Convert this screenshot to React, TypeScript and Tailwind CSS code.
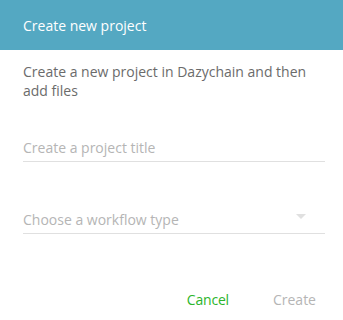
import React from "react";

export default function App() {
  return (
    <div className="w-[343px] h-[320px] bg-white overflow-hidden" style={{ fontFamily: '"Open Sans", sans-serif' }}>
      <div className="h-[50px] bg-[#54a8c2] flex items-center pl-[23px] text-white text-[14px]">
        Create new project
      </div>
      <div className="pl-[23px] pr-[18px]">
        <p className="pt-[12px] text-[14px] leading-[19px] text-[#6b6b6b]">
          Create a new project in Dazychain and then add files
        </p>
        <div className="mt-[38px] border-b border-[#e0e0e0]">
          <input
            className="block w-full text-[14px] leading-[19px] h-[19px] mb-[4px] outline-none text-[#6b6b6b] placeholder:text-[#b5b5b5] bg-transparent"
            placeholder="Create a project title"
          />
        </div>
        <div className="mt-[48px] border-b border-[#e0e0e0] relative">
          <div className="text-[14px] leading-[19px] h-[19px] mb-[4px] text-[#b5b5b5]">Choose a workflow type</div>
          <div className="absolute right-[19px] top-[4px] w-0 h-0 border-l-[5px] border-r-[5px] border-t-[5px] border-l-transparent border-r-transparent border-t-[#e0e0e0]" />
        </div>
        <div className="mt-[56px] flex justify-end pr-[9px] gap-[44px] text-[14px] leading-[19px]">
          <button className="text-[#2bb52b] tracking-[-0.2px]">Cancel</button>
          <button className="text-[#b5b5b5]">Create</button>
        </div>
      </div>
    </div>
  );
}
